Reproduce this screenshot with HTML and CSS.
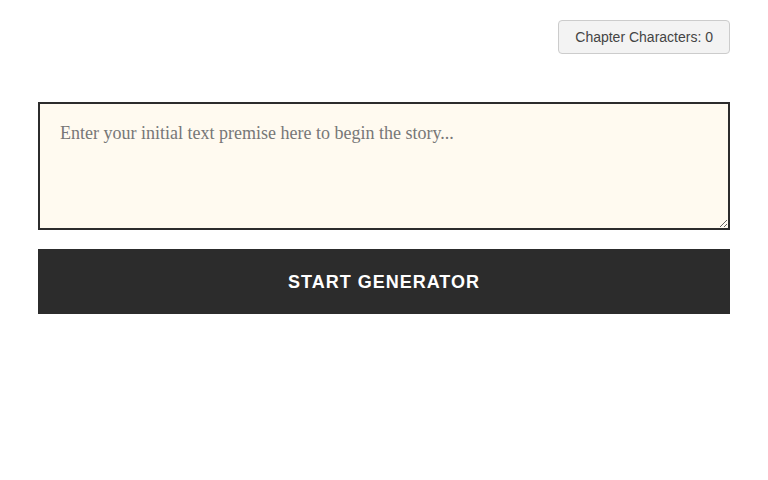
FILE: index.html
```html
<!DOCTYPE html>
<html lang="en">
<head>
<meta charset="utf-8">
<title>Story Generator</title>
<link rel="stylesheet" href="styles.css">
</head>
<body>
<main class="app">
  <div class="toolbar">
    <span class="counter">Chapter Characters: 0</span>
  </div>
  <textarea class="premise" placeholder="Enter your initial text premise here to begin the story..."></textarea>
  <button class="start" type="button">Start Generator</button>
</main>
</body>
</html>
```
FILE: styles.css
```css
html, body {
  margin: 0;
  background: #ffffff;
}
body {
  padding: 8px;
  font-family: "Liberation Sans", Arial, sans-serif;
}
.app {
  padding: 12px 30px;
  display: flex;
  flex-direction: column;
}
.toolbar {
  display: flex;
  justify-content: flex-end;
  margin-bottom: 48px;
}
.counter {
  box-sizing: border-box;
  height: 34px;
  padding: 8px 16px;
  font-size: 14px;
  line-height: 16px;
  color: #444444;
  background: #f3f3f3;
  border: 1px solid #cccccc;
  border-radius: 4px;
}
.premise {
  box-sizing: border-box;
  display: block;
  width: 100%;
  height: 128px;
  margin: 0 0 19px;
  padding: 18px 20px 20px;
  font-family: "Liberation Serif", "Times New Roman", serif;
  font-size: 18px;
  line-height: 22px;
  color: #333333;
  background: #fffaf0;
  border: 2px solid #2c2c2c;
  border-radius: 0;
  resize: vertical;
  outline: none;
}
.premise::placeholder {
  color: #777777;
}
.start {
  box-sizing: border-box;
  height: 65px;
  width: 100%;
  padding: 2px 0 0;
  border: none;
  background: #2c2c2c;
  color: #ffffff;
  font-family: "Liberation Sans", Arial, sans-serif;
  font-weight: bold;
  font-size: 18px;
  letter-spacing: 1px;
  text-transform: uppercase;
  cursor: pointer;
}
```
